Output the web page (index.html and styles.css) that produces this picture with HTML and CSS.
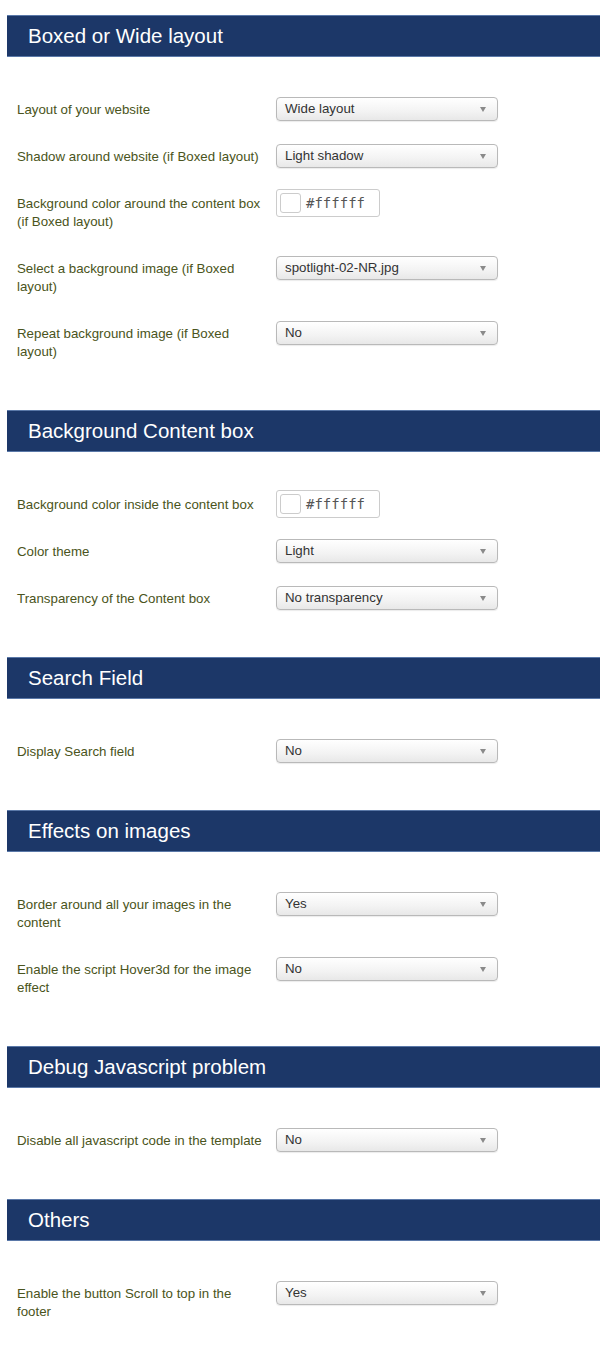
FILE: index.html
```html
<!DOCTYPE html>
<html lang="en">
<head>
    <meta charset="UTF-8">
    <title>Template settings</title>
    <link rel="stylesheet" href="styles.css">
</head>
<body>
    <div class="page">

        <h2 class="section-title">Boxed or Wide layout</h2>
        <div class="section">
            <div class="row">
                <label class="row-label">Layout of your website</label>
                <div class="control"><div class="select">Wide layout</div></div>
            </div>
            <div class="row">
                <label class="row-label">Shadow around website (if Boxed layout)</label>
                <div class="control"><div class="select">Light shadow</div></div>
            </div>
            <div class="row">
                <label class="row-label">Background color around the content box (if Boxed layout)</label>
                <div class="control"><div class="color"><span class="swatch"></span>#ffffff</div></div>
            </div>
            <div class="row">
                <label class="row-label">Select a background image (if Boxed layout)</label>
                <div class="control"><div class="select">spotlight-02-NR.jpg</div></div>
            </div>
            <div class="row">
                <label class="row-label">Repeat background image (if Boxed layout)</label>
                <div class="control"><div class="select">No</div></div>
            </div>
        </div>

        <h2 class="section-title">Background Content box</h2>
        <div class="section">
            <div class="row">
                <label class="row-label">Background color inside the content box</label>
                <div class="control"><div class="color"><span class="swatch"></span>#ffffff</div></div>
            </div>
            <div class="row">
                <label class="row-label">Color theme</label>
                <div class="control"><div class="select">Light</div></div>
            </div>
            <div class="row">
                <label class="row-label">Transparency of the Content box</label>
                <div class="control"><div class="select">No transparency</div></div>
            </div>
        </div>

        <h2 class="section-title">Search Field</h2>
        <div class="section">
            <div class="row">
                <label class="row-label">Display Search field</label>
                <div class="control"><div class="select">No</div></div>
            </div>
        </div>

        <h2 class="section-title">Effects on images</h2>
        <div class="section">
            <div class="row">
                <label class="row-label">Border around all your images in the content</label>
                <div class="control"><div class="select">Yes</div></div>
            </div>
            <div class="row">
                <label class="row-label">Enable the script Hover3d for the image effect</label>
                <div class="control"><div class="select">No</div></div>
            </div>
        </div>

        <h2 class="section-title">Debug Javascript problem</h2>
        <div class="section">
            <div class="row">
                <label class="row-label">Disable all javascript code in the template</label>
                <div class="control"><div class="select">No</div></div>
            </div>
        </div>

        <h2 class="section-title">Others</h2>
        <div class="section">
            <div class="row">
                <label class="row-label">Enable the button Scroll to top in the footer</label>
                <div class="control"><div class="select">Yes</div></div>
            </div>
        </div>

    </div>
</body>
</html>
```
FILE: styles.css
```css
body {
    margin: 0;
    padding: 0;
    background-color: #ffffff;
    font-family: "Liberation Sans", Arial, sans-serif;
}

.page {
    padding: 15px 0 0 7px;
}

.section-title {
    margin: 0;
    height: 42px;
    box-sizing: border-box;
    padding-left: 21px;
    background-color: #1c3768;
    border-top: 1px solid #5a78a8;
    border-bottom: 1px solid #5a78a8;
    color: #ffffff;
    font-size: 20.5px;
    font-weight: normal;
    line-height: 40px;
}

.section {
    padding: 37px 0 27px 10px;
}

.row {
    display: flex;
    align-items: flex-start;
    margin-bottom: 17px;
}

.row-label {
    width: 259px;
    padding: 7px 11px 5px 0;
    box-sizing: border-box;
    color: #4a5420;
    font-size: 13.3px;
    line-height: 18px;
}

.control {
    height: 30px;
    display: flex;
    align-items: center;
}

.select {
    position: relative;
    width: 222px;
    height: 24px;
    box-sizing: border-box;
    padding-left: 8px;
    border: 1px solid #b9b9b9;
    border-radius: 4px;
    background: linear-gradient(#ffffff, #f3f3f3 60%, #e8e8e8);
    box-shadow: 0 1px 1px rgba(0, 0, 0, 0.08);
    color: #333333;
    font-size: 13.3px;
    line-height: 22px;
}

.select::after {
    content: "";
    position: absolute;
    right: 11px;
    top: 9px;
    border-left: 3px solid transparent;
    border-right: 3px solid transparent;
    border-top: 5px solid #8a8a8a;
}

.color {
    width: 104px;
    height: 28px;
    box-sizing: border-box;
    padding: 3px;
    display: flex;
    align-items: center;
    gap: 5px;
    border: 1px solid #cccccc;
    border-radius: 3px;
    background-color: #ffffff;
    color: #555555;
    font-family: "DejaVu Sans Mono", "Liberation Mono", monospace;
    font-size: 14px;
}

.swatch {
    width: 21px;
    height: 20px;
    box-sizing: border-box;
    border: 1px solid #cccccc;
    border-radius: 3px;
    background-color: #ffffff;
}
```
